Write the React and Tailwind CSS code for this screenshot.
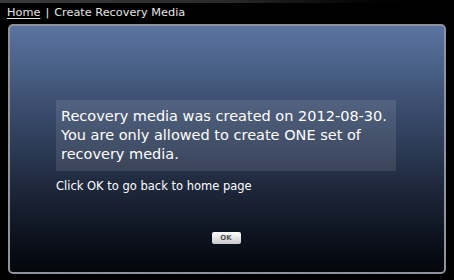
export default function App() {
  return (
    <div className="w-[454px] h-[280px] bg-black flex flex-col overflow-hidden" style={{ fontFamily: '"DejaVu Sans", Verdana, sans-serif' }}>
      <div className="h-[3px] bg-gradient-to-r from-[#3a3a3a] via-[#2a2a2a] to-black" />
      <div className="h-[20px] pl-[7px] flex items-center text-[11.3px] text-[#e4e4e4]">
        <span className="underline underline-offset-2">Home</span>
        <span className="mx-[5px]">|</span>
        <span>Create Recovery Media</span>
      </div>
      <div className="mx-[8px] mt-[1px] h-[250px] rounded-[5px] border-2 border-[#8d929b] bg-gradient-to-b from-[#5a74a1] via-[#2c3a55] to-[#04060b] flex flex-col">
        <div className="ml-[46px] mt-[74px] w-[340px] bg-white/10 px-[5px] py-[7px] text-[14.5px] leading-[19px] text-white">
          Recovery media was created on 2012-08-30.
          <br />
          You are only allowed to create ONE set of
          <br />
          recovery media.
        </div>
        <div className="ml-[46px] mt-[7px] text-[11.5px] text-white">Click OK to go back to home page</div>
        <div className="flex justify-center mt-[37px]">
          <button className="ml-[-2px] w-[29px] h-[12px] rounded-[2px] bg-gradient-to-b from-white to-[#c9c9c9] text-[7px] font-bold text-[#555] leading-none">OK</button>
        </div>
      </div>
    </div>
  );
}
